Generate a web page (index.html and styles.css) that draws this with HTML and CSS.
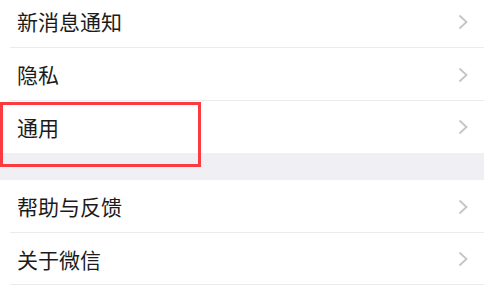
FILE: index.html
```html
<!DOCTYPE html>
<html lang="zh-CN">
<head>
    <meta charset="UTF-8">
    <meta name="viewport" content="width=device-width, initial-scale=1.0">
    <title>设置</title>
    <link rel="stylesheet" href="styles.css">
</head>
<body>
    <div class="settings">
        <div class="group">
            <div class="cell">
                <span class="cell-title">新消息通知</span>
                <svg class="arrow" viewBox="0 0 10 16"><path d="M1.5 1.5 L8.5 8 L1.5 14.5"/></svg>
            </div>
            <div class="cell">
                <span class="cell-title">隐私</span>
                <svg class="arrow" viewBox="0 0 10 16"><path d="M1.5 1.5 L8.5 8 L1.5 14.5"/></svg>
            </div>
            <div class="cell last">
                <span class="cell-title">通用</span>
                <svg class="arrow" viewBox="0 0 10 16"><path d="M1.5 1.5 L8.5 8 L1.5 14.5"/></svg>
                <div class="mark"></div>
            </div>
        </div>

        <div class="gap"></div>

        <div class="group">
            <div class="cell">
                <span class="cell-title">帮助与反馈</span>
                <svg class="arrow" viewBox="0 0 10 16"><path d="M1.5 1.5 L8.5 8 L1.5 14.5"/></svg>
            </div>
            <div class="cell short">
                <span class="cell-title">关于微信</span>
                <svg class="arrow" viewBox="0 0 10 16"><path d="M1.5 1.5 L8.5 8 L1.5 14.5"/></svg>
            </div>
        </div>
    </div>
</body>
</html>
```

FILE: styles.css
```css
* {
    margin: 0;
    padding: 0;
    box-sizing: border-box;
}

body {
    font-family: "Noto Sans CJK SC", "Noto Sans", sans-serif;
    background: #ffffff;
    overflow: hidden;
}

.settings {
    margin-top: -5px;
}

.group {
    background: #ffffff;
}

.cell {
    position: relative;
    display: flex;
    align-items: center;
    justify-content: space-between;
    height: 53px;
    padding: 0 16px 0 17px;
}

.cell::after {
    content: "";
    position: absolute;
    left: 10px;
    right: 0;
    bottom: 0;
    height: 1px;
    background: #ebebeb;
}

.cell.last {
    height: 52px;
}

.cell.last::after {
    display: none;
}

.cell.short {
    height: 52px;
}

.cell-title {
    font-size: 21px;
    color: #1b1b1b;
    line-height: 1;
}

.arrow {
    width: 10px;
    height: 16px;
    fill: none;
    stroke: #c4c4c8;
    stroke-width: 1.8;
}

.gap {
    height: 27px;
    background: #efeff4;
}

.mark {
    position: absolute;
    left: 0;
    top: 1px;
    width: 201px;
    height: 65px;
    border: 3px solid #fb3b40;
}
```
